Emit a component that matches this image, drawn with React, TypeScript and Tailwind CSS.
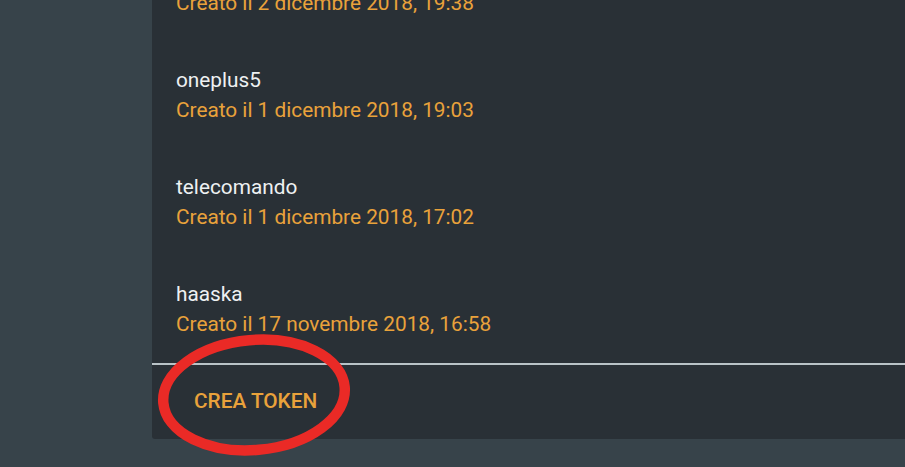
const tokens = [
  { name: "pixel2", created: "Creato il 2 dicembre 2018, 19:38" },
  { name: "oneplus5", created: "Creato il 1 dicembre 2018, 19:03" },
  { name: "telecomando", created: "Creato il 1 dicembre 2018, 17:02" },
  { name: "haaska", created: "Creato il 17 novembre 2018, 16:58" },
];

function App() {
  return (
    // Page
    <div className="w-[905px] h-[467px] overflow-hidden bg-[#37434a] font-['Roboto',sans-serif] relative">
      {/* Card */}
      <div className="ml-[152px] w-[780px] -mt-[66px] bg-[#293036] rounded-[3px]">
        {/* Token list */}
        <div className="flex flex-col">
          {tokens.map((t) => (
            <div key={t.name} className="px-[24px] pt-[25px] pb-[24px]">
              <div className="text-[20.8px] leading-[28px] text-[#eef1f2]">{t.name}</div>
              <div className="mt-[2px] text-[20.8px] leading-[28px] text-[#e9a23b]">{t.created}</div>
            </div>
          ))}
        </div>

        <div className="mt-[1px] h-[2px] bg-[#b9c3c7]" />

        {/* Actions */}
        <div className="h-[74px] flex items-center pl-[42px]">
          <button className="text-[20.8px] font-medium uppercase text-[#e9a23b]">
            Crea token
          </button>
        </div>
      </div>

      {/* Red annotation circle */}
      <svg
        className="absolute left-[150px] top-[328px] pointer-events-none"
        width="210"
        height="135"
        viewBox="0 0 210 135"
      >
        <ellipse
          cx="104"
          cy="67"
          rx="91"
          ry="55"
          transform="rotate(-5 104 67)"
          fill="none"
          stroke="#ea2a26"
          strokeWidth="10.5"
        />
      </svg>
    </div>
  );
}

export default App;
